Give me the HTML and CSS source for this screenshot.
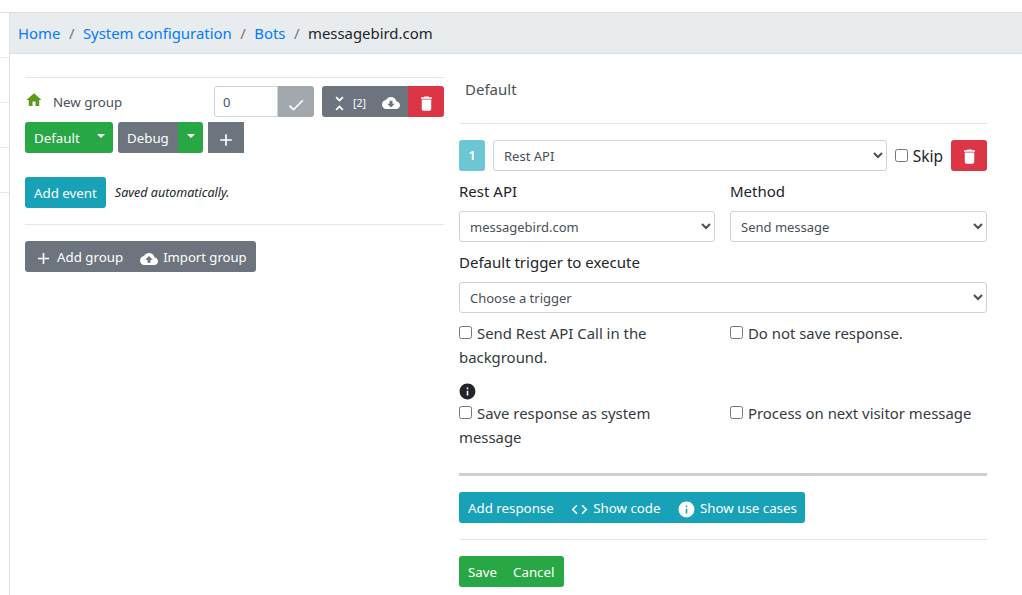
FILE: index.html
```html
<!DOCTYPE html>
<html lang="en">
<head>
    <meta charset="UTF-8">
    <meta name="viewport" content="width=device-width, initial-scale=1.0">
    <title>messagebird.com</title>
    <link rel="stylesheet" href="styles.css">
</head>
<body>
    <svg class="icon-defs" aria-hidden="true">
        <symbol id="i-home" viewBox="0 0 24 24"><path d="M10 20v-6h4v6h5v-8h3L12 3 2 12h3v8z"/></symbol>
        <symbol id="i-check" viewBox="0 0 24 24"><path d="M9 16.17L4.83 12l-1.42 1.41L9 19 21 7l-1.41-1.41z"/></symbol>
        <symbol id="i-unfold" viewBox="0 0 24 24"><path d="M7.41 18.59L8.83 20 12 16.83 15.17 20l1.41-1.41L12 14l-4.59 4.59zm9.18-13.18L15.17 4 12 7.17 8.83 4 7.41 5.41 12 10l4.59-4.59z"/></symbol>
        <symbol id="i-download" viewBox="0 0 24 24"><path d="M19.35 10.04C18.67 6.59 15.64 4 12 4 9.11 4 6.6 5.64 5.35 8.04 2.34 8.36 0 10.91 0 14c0 3.31 2.69 6 6 6h13c2.76 0 5-2.24 5-5 0-2.64-2.05-4.78-4.65-4.96zM17 13l-5 5-5-5h3V9h4v4h3z"/></symbol>
        <symbol id="i-upload" viewBox="0 0 24 24"><path d="M19.35 10.04C18.67 6.59 15.64 4 12 4 9.11 4 6.6 5.64 5.35 8.04 2.34 8.36 0 10.91 0 14c0 3.31 2.69 6 6 6h13c2.76 0 5-2.24 5-5 0-2.64-2.05-4.78-4.65-4.96zM14 13v4h-4v-4H7l5-5 5 5h-3z"/></symbol>
        <symbol id="i-delete" viewBox="0 0 24 24"><path d="M6 19c0 1.1.9 2 2 2h8c1.1 0 2-.9 2-2V7H6v12zM19 4h-3.5l-1-1h-5l-1 1H5v2h14V4z"/></symbol>
        <symbol id="i-add" viewBox="0 0 24 24"><path d="M19 13h-6v6h-2v-6H5v-2h6V5h2v6h6v2z"/></symbol>
        <symbol id="i-code" viewBox="0 0 24 24"><path d="M9.4 16.6L4.8 12l4.6-4.6L8 6l-6 6 6 6 1.4-1.4zm5.2 0l4.6-4.6-4.6-4.6L16 6l6 6-6 6-1.4-1.4z"/></symbol>
        <symbol id="i-info" viewBox="0 0 24 24"><path d="M12 2C6.48 2 2 6.48 2 12s4.48 10 10 10 10-4.48 10-10S17.52 2 12 2zm1 15h-2v-6h2v6zm0-8h-2V7h2v2z"/></symbol>
    </svg>

    <div class="layout">
        <div class="sidebar">
            <div class="sidebar-row"></div>
            <div class="sidebar-row"></div>
            <div class="sidebar-row"></div>
            <div class="sidebar-row"></div>
        </div>

        <div class="main">
            <ul class="breadcrumb">
                <li><a href="#">Home</a></li>
                <li class="sep">/</li>
                <li><a href="#">System configuration</a></li>
                <li class="sep">/</li>
                <li><a href="#">Bots</a></li>
                <li class="sep">/</li>
                <li>messagebird.com</li>
            </ul>

            <div class="content">
                <div class="left-col">
                    <hr class="rule">
                    <div class="group-head">
                        <svg class="icon icon-home"><use href="#i-home"/></svg>
                        <span class="group-name">New group</span>
                        <div class="btn-group group-pos">
                            <input class="form-control pos-input" type="text" value="0">
                            <button class="btn btn-muted btn-check" type="button"><svg class="icon"><use href="#i-check"/></svg></button>
                        </div>
                        <div class="btn-group">
                            <button class="btn btn-gray btn-collapse" type="button"><svg class="icon"><use href="#i-unfold"/></svg><span class="count">[2]</span></button>
                            <button class="btn btn-gray btn-cloud" type="button"><svg class="icon"><use href="#i-download"/></svg></button>
                            <button class="btn btn-red btn-trash" type="button"><svg class="icon"><use href="#i-delete"/></svg></button>
                        </div>
                    </div>

                    <div class="trigger-row">
                        <div class="btn-group">
                            <button class="btn btn-green btn-default" type="button">Default</button>
                            <button class="btn btn-green btn-caret" type="button"><span class="caret"></span></button>
                        </div>
                        <div class="btn-group">
                            <button class="btn btn-gray btn-debug" type="button">Debug</button>
                            <button class="btn btn-green btn-caret btn-caret-wide" type="button"><span class="caret"></span></button>
                        </div>
                        <button class="btn btn-gray btn-plus" type="button"><svg class="icon"><use href="#i-add"/></svg></button>
                    </div>

                    <div class="event-row">
                        <button class="btn btn-teal" type="button">Add event</button>
                        <em class="saved">Saved automatically.</em>
                    </div>

                    <hr class="rule rule-event">

                    <div class="btn-group">
                        <button class="btn btn-gray btn-add-group" type="button"><svg class="icon"><use href="#i-add"/></svg>Add group</button>
                        <button class="btn btn-gray btn-import" type="button"><svg class="icon"><use href="#i-upload"/></svg>Import group</button>
                    </div>
                </div>

                <div class="right-col">
                    <div class="trigger-title">Default</div>
                    <hr class="rule rule-title">

                    <div class="response-head">
                        <button class="btn btn-num" type="button">1</button>
                        <select class="form-control select-type"><option>Rest API</option></select>
                        <label class="skip"><input type="checkbox">Skip</label>
                        <button class="btn btn-red btn-trash-big" type="button"><svg class="icon"><use href="#i-delete"/></svg></button>
                    </div>

                    <div class="two-col">
                        <div>
                            <label class="field-label">Rest API</label>
                            <select class="form-control"><option>messagebird.com</option></select>
                        </div>
                        <div>
                            <label class="field-label">Method</label>
                            <select class="form-control"><option>Send message</option></select>
                        </div>
                    </div>

                    <label class="field-label">Default trigger to execute</label>
                    <select class="form-control"><option>Choose a trigger</option></select>

                    <div class="two-col checks">
                        <label class="check"><input type="checkbox">Send Rest API Call in the background.</label>
                        <label class="check"><input type="checkbox">Do not save response.</label>
                    </div>
                    <svg class="icon icon-info"><use href="#i-info"/></svg>
                    <div class="two-col">
                        <label class="check"><input type="checkbox">Save response as system message</label>
                        <label class="check"><input type="checkbox">Process on next visitor message</label>
                    </div>

                    <hr class="rule-thick">

                    <div class="btn-group response-actions">
                        <button class="btn btn-teal" type="button">Add response</button>
                        <button class="btn btn-teal" type="button"><svg class="icon"><use href="#i-code"/></svg>Show code</button>
                        <button class="btn btn-teal" type="button"><svg class="icon"><use href="#i-info"/></svg>Show use cases</button>
                    </div>

                    <hr class="rule rule-actions">

                    <div class="btn-group">
                        <button class="btn btn-green" type="button">Save</button>
                        <button class="btn btn-green btn-cancel" type="button">Cancel</button>
                    </div>
                </div>
            </div>
        </div>
    </div>
</body>
</html>
```

FILE: styles.css
```css
* {
    box-sizing: border-box;
}

body {
    margin: 0;
    height: 595px;
    overflow: hidden;
    font-family: "Noto Sans", Arial, sans-serif;
    font-size: 15px;
    line-height: 24px;
    color: #212529;
    background: white;
}

.icon-defs {
    display: none;
}

.icon {
    width: 16px;
    height: 16px;
    fill: currentColor;
    flex: none;
}

.layout {
    display: flex;
    padding-top: 12px;
    height: 595px;
}

/* narrow strip on the left, only its row lines are visible */
.sidebar {
    width: 10px;
    flex: none;
    border-top: 1px solid #dee2e6;
    border-right: 1px solid #dee2e6;
}

.sidebar-row {
    height: 45px;
    border-bottom: 1px solid #e6e8ea;
}

.main {
    flex: 1;
    min-width: 0;
}

.breadcrumb {
    display: flex;
    align-items: center;
    height: 42px;
    margin: 0;
    padding: 0 0 0 8px;
    list-style: none;
    background: #e9ecef;
    border-top: 1px solid #dee2e6;
    border-bottom: 1px solid #dee2e6;
    font-size: 14.9px;
}

.breadcrumb a {
    color: #007bff;
    text-decoration: none;
}

.breadcrumb .sep {
    padding: 0 8.5px;
    color: #6c757d;
}

.content {
    display: grid;
    grid-template-columns: 419px 528px;
    column-gap: 15px;
    padding-left: 15px;
}

.rule {
    margin: 0;
    border: 0;
    border-top: 1px solid #e4e6e8;
}

.left-col {
    padding-top: 23px;
}

.group-head {
    display: flex;
    align-items: center;
    height: 31px;
    margin-top: 8px;
}

.icon-home {
    width: 18px;
    height: 18px;
    margin: -4px 0 0 0;
    color: #5c9a1c;
}

.group-name {
    margin-left: 10px;
    flex: 1;
    font-size: 13.3px;
    color: #495057;
}

.btn-group {
    display: inline-flex;
}

.group-pos {
    margin-right: 8px;
}

.btn {
    display: inline-flex;
    align-items: center;
    height: 31px;
    padding: 1px 9px 0;
    border: 0;
    border-radius: 0;
    font-family: inherit;
    font-size: 13.3px;
    line-height: 21px;
    color: white;
    white-space: nowrap;
}

.btn-group .btn:first-child,
.btn-group .form-control:first-child {
    border-radius: 3px 0 0 3px;
}

.btn-group .btn:last-child {
    border-radius: 0 3px 3px 0;
}

.btn-green { background: #28a745; }
.btn-gray { background: #6c757d; }
.btn-red { background: #dc3545; }
.btn-teal { background: #17a2b8; }
.btn-muted { background: #a3a8ad; }

.form-control {
    display: block;
    width: 100%;
    height: 31px;
    padding: 0 6px;
    border: 1px solid #ced4da;
    border-radius: 3px;
    font-family: inherit;
    font-size: 13px;
    color: #495057;
    background-color: white;
}

.pos-input {
    width: 64px;
    padding: 0 8px;
}

.btn-check {
    width: 36px;
    justify-content: center;
    padding: 0;
}

.btn-check .icon {
    width: 20px;
    height: 20px;
    margin-top: 6px;
}

.btn-collapse {
    width: 50px;
    padding: 0 0 0 7px;
}

.btn-collapse .icon {
    width: 21px;
    height: 21px;
    margin-top: 4px;
}

.count {
    margin: 3px 0 0 3px;
    font-size: 10.5px;
}

.btn-cloud {
    width: 36px;
    padding: 0 0 0 10px;
}

.btn-cloud .icon {
    width: 18px;
    height: 18px;
    margin-top: 3px;
}

.btn-trash {
    width: 36px;
    justify-content: center;
    padding: 0;
}

.btn-trash .icon {
    width: 19px;
    height: 19px;
    margin-top: 3px;
}

.trigger-row {
    display: flex;
    gap: 5px;
    margin-top: 5px;
}

.btn-default {
    width: 63px;
}

.btn-debug {
    width: 60px;
}

.btn-caret {
    width: 25px;
    justify-content: center;
    padding: 0;
}

.btn-caret-wide {
    width: 25px;
    padding-left: 1px;
}

.caret {
    margin-top: -3px;
    border-top: 4px solid white;
    border-left: 4px solid transparent;
    border-right: 4px solid transparent;
}

.btn-plus {
    width: 36px;
    justify-content: center;
    padding: 0;
}

.btn-plus .icon {
    width: 20px;
    height: 20px;
    margin-top: 5px;
}

.event-row {
    display: flex;
    align-items: center;
    gap: 9px;
    margin-top: 24px;
}

.event-row .btn {
    border-radius: 3px;
}

.saved {
    font-size: 12.5px;
}

.rule-event {
    margin: 16px 0;
}

.btn-add-group .icon {
    width: 19px;
    height: 19px;
    margin: 3px 4px 0 0;
}

.btn-import .icon {
    width: 18px;
    height: 18px;
    margin: 3px 5px 0 0;
}

.btn-import {
    padding-left: 8px;
    font-size: 13.1px;
}

.trigger-title {
    padding: 23px 0 0 6px;
    height: 47px;
    font-size: 15px;
    color: #495057;
}

.rule-title {
    margin: 22px 0 16px;
}

.response-head {
    display: flex;
    align-items: center;
}

.btn-num {
    width: 26px;
    justify-content: center;
    padding: 0;
    border-radius: 3px;
    background: #6cc6d4;
    font-weight: 600;
}

.select-type {
    flex: 1;
    min-width: 0;
    margin-left: 8px;
}

.skip {
    display: flex;
    align-items: center;
    margin: 0 8px;
    font-size: 15.5px;
}

.skip input,
.check input {
    width: 13px;
    height: 13px;
    margin: 0 5px 0 0;
}

.btn-trash-big {
    width: 36px;
    justify-content: center;
    padding: 0;
    border-radius: 3px;
}

.btn-trash-big .icon {
    width: 19px;
    height: 19px;
    margin-top: 2px;
}

.two-col {
    display: grid;
    grid-template-columns: 256px 257px;
    column-gap: 15px;
}

.field-label {
    display: block;
    margin: 8px 0;
    font-size: 15px;
    line-height: 24px;
}

.checks {
    margin-top: 8px;
}

.check {
    font-size: 14.9px;
    line-height: 24px;
    color: #343a40;
}

.icon-info {
    display: block;
    width: 19px;
    height: 19px;
    margin: 13px 0 0 -1px;
}

.rule-thick {
    margin: 24px 0 16px;
    border: 0;
    border-top: 3px solid #cfcfcf;
}

.response-actions .btn + .btn {
    padding-left: 7.5px;
}

.response-actions .btn:last-child {
    padding-right: 8px;
}

.response-actions .icon {
    width: 19px;
    height: 19px;
    margin: 3px 4px 0 0;
}

.rule-actions {
    margin: 16px 0;
}

.btn-cancel {
    padding-left: 7px;
    padding-right: 10px;
}
```
